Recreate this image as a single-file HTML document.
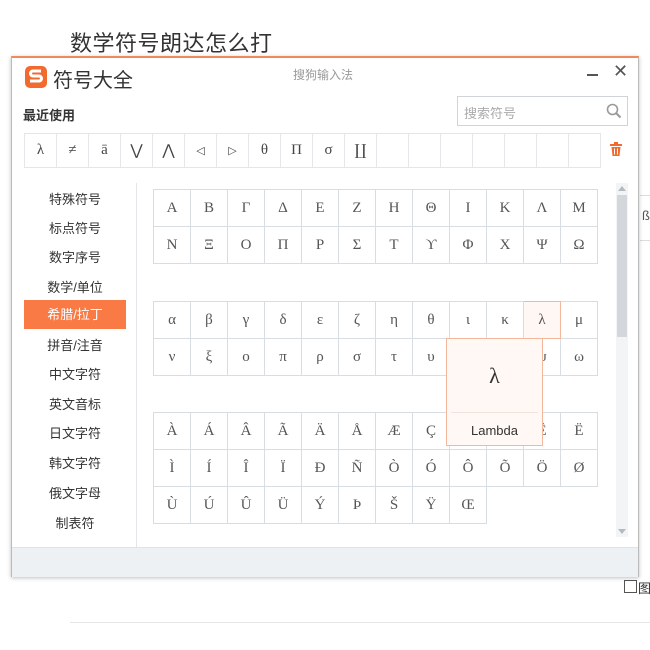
<!DOCTYPE html>
<html><head><meta charset="utf-8"><style>
*{margin:0;padding:0;box-sizing:border-box}
body{width:650px;height:650px;background:#fff;position:relative;overflow:hidden;font-family:"Liberation Sans","Noto Sans CJK SC",sans-serif;color:#333}
.abs{position:absolute}
.title{left:70px;top:26px;font-size:22px;color:#333;letter-spacing:0.5px}
.win{left:11px;top:56px;width:628px;height:521px;background:#fff;border:1px solid #bbb;border-top:2px solid #f08a5d;box-shadow:0 1px 4px rgba(0,0,0,.25)}
table{border-collapse:collapse;position:absolute}
td{border:1px solid #d8dde3;width:37px;height:37px;text-align:center;vertical-align:middle;font-family:"Liberation Serif","DejaVu Serif",serif;font-size:15px;color:#555;padding:0}
.recent td{width:32px;height:34px;border-color:#e4e7ea;font-size:15px;color:#444}
.side div{position:absolute;left:12px;width:102px;text-align:center;font-size:13px;color:#333;height:29px;line-height:29px}
.side .act{background:#f97a45;color:#fff}
</style></head><body>
<div class="abs title">数学符号朗达怎么打</div>
<div class="abs" style="left:640px;top:195px;width:10px;height:1px;background:#ddd"></div>
<div class="abs" style="left:640px;top:240px;width:10px;height:1px;background:#ddd"></div>
<div class="abs" style="left:642px;top:208px;font-size:13px;color:#555">ß</div>
<div class="abs" style="left:624px;top:580px;width:13px;height:13px;border:1px solid #555"></div>
<div class="abs" style="left:638px;top:578px;font-size:13px;color:#333">图</div>
<div class="abs" style="left:70px;top:622px;width:580px;height:1px;background:#e6e6e6"></div>

<div class="abs win">
 <!-- title bar -->
 <svg class="abs" style="left:12px;top:7px" width="24" height="24" viewBox="0 0 24 24"><rect x="1" y="1" width="22" height="22" rx="5" fill="#f26a2e"/><path d="M17 6H9a2.5 2.5 0 0 0 0 5h6a2.5 2.5 0 0 1 0 5H6" stroke="#fff" stroke-width="3" fill="none"/></svg>
 <div class="abs" style="left:41px;top:6px;font-size:20px;color:#333">符号大全</div>
 <div class="abs" style="left:281px;top:8px;font-size:12px;color:#999">搜狗输入法</div>
 <div class="abs" style="left:575px;top:16px;width:11px;height:2px;background:#555"></div>
 <div class="abs" style="left:601px;top:3px;font-size:18px;color:#555">✕</div>
 <div class="abs" style="left:11px;top:47px;font-size:13px;font-weight:bold;color:#333">最近使用</div>
 <div class="abs" style="left:445px;top:38px;width:171px;height:30px;border:1px solid #d0d4d8;background:#fff"></div>
 <div class="abs" style="left:452px;top:45px;font-size:13px;color:#aaa">搜索符号</div>
 <svg class="abs" style="left:594px;top:45px" width="16" height="16"><circle cx="6.5" cy="6.5" r="5" stroke="#999" stroke-width="1.6" fill="none"/><path d="M10 10l4.5 4.5" stroke="#999" stroke-width="2"/></svg>
 <table class="recent" style="left:12px;top:75px"><tr><td>λ</td><td>≠</td><td>ā</td><td>⋁</td><td>⋀</td><td style="font-size:11px">◁</td><td style="font-size:11px">▷</td><td>θ</td><td>Π</td><td>σ</td><td>∐</td><td></td><td></td><td></td><td></td><td></td><td></td><td></td></tr></table>
 <svg class="abs" style="left:598px;top:84px" width="12" height="14"><rect x="0" y="2" width="12" height="2" fill="#f26a2e"/><rect x="4" y="0" width="4" height="2" fill="#f26a2e"/><path d="M1.5 5h9l-1 9h-7z" fill="#f26a2e"/><path d="M4.5 6.5v6M7.5 6.5v6" stroke="#fff" stroke-width="1"/></svg>
 <!-- sidebar -->
 <div class="side">
  <div style="top:127px">特殊符号</div>
  <div style="top:156px">标点符号</div>
  <div style="top:185px">数字序号</div>
  <div style="top:215px">数学/单位</div>
  <div class="act" style="top:242px">希腊/拉丁</div>
  <div style="top:273px">拼音/注音</div>
  <div style="top:302px">中文字符</div>
  <div style="top:332px">英文音标</div>
  <div style="top:361px">日文字符</div>
  <div style="top:391px">韩文字符</div>
  <div style="top:421px">俄文字母</div>
  <div style="top:451px">制表符</div>
 </div>
 <div class="abs" style="left:124px;top:125px;width:1px;height:364px;background:#e3e6e9"></div>
 <!-- grids -->
 <table style="left:141px;top:131px">
  <tr><td>Α</td><td>Β</td><td>Γ</td><td>Δ</td><td>Ε</td><td>Ζ</td><td>Η</td><td>Θ</td><td>Ι</td><td>Κ</td><td>Λ</td><td>Μ</td></tr>
  <tr><td>Ν</td><td>Ξ</td><td>Ο</td><td>Π</td><td>Ρ</td><td>Σ</td><td>Τ</td><td>ϒ</td><td>Φ</td><td>Χ</td><td>Ψ</td><td>Ω</td></tr>
 </table>
 <table style="left:141px;top:243px">
  <tr><td>α</td><td>β</td><td>γ</td><td>δ</td><td>ε</td><td>ζ</td><td>η</td><td>θ</td><td>ι</td><td>κ</td><td style="border:1px solid #f4b79b;background:#fff7f3">λ</td><td>μ</td></tr>
  <tr><td>ν</td><td>ξ</td><td>ο</td><td>π</td><td>ρ</td><td>σ</td><td>τ</td><td>υ</td><td>φ</td><td>χ</td><td>ψ</td><td>ω</td></tr>
 </table>
 <table style="left:141px;top:354px">
  <tr><td>À</td><td>Á</td><td>Â</td><td>Ã</td><td>Ä</td><td>Å</td><td>Æ</td><td>Ç</td><td>È</td><td>É</td><td>Ê</td><td>Ë</td></tr>
  <tr><td>Ì</td><td>Í</td><td>Î</td><td>Ï</td><td>Ð</td><td>Ñ</td><td>Ò</td><td>Ó</td><td>Ô</td><td>Õ</td><td>Ö</td><td>Ø</td></tr>
  <tr><td>Ù</td><td>Ú</td><td>Û</td><td>Ü</td><td>Ý</td><td>Þ</td><td>Š</td><td>Ÿ</td><td>Œ</td></tr>
 </table>
 <!-- popup -->
 <div class="abs" style="left:434px;top:280px;width:97px;height:108px;background:#fff8f5;border:1px solid #f4b79b">
  <div style="text-align:center;margin-top:24px;font-family:'Liberation Serif',serif;font-size:22px;color:#333">λ</div>
  <div style="position:absolute;left:4px;right:4px;top:73px;height:1px;background:#f1e4de"></div>
  <div style="position:absolute;left:0;right:0;top:84px;text-align:center;font-size:13px;color:#333">Lambda</div>
 </div>
 <!-- scrollbar -->
 <div class="abs" style="left:604px;top:125px;width:12px;height:354px;background:#f3f4f6"></div>
 <div class="abs" style="left:605px;top:137px;width:10px;height:142px;background:#d3d6da"></div>
 <div class="abs" style="left:606px;top:128px;width:0;height:0;border-left:4px solid transparent;border-right:4px solid transparent;border-bottom:5px solid #b5bac0"></div>
 <div class="abs" style="left:606px;top:471px;width:0;height:0;border-left:4px solid transparent;border-right:4px solid transparent;border-top:5px solid #b5bac0"></div>
 <!-- footer -->
 <div class="abs" style="left:0;top:489px;width:626px;height:30px;background:#eef1f4;border-top:1px solid #e0e3e6"></div>
</div>
</body></html>
